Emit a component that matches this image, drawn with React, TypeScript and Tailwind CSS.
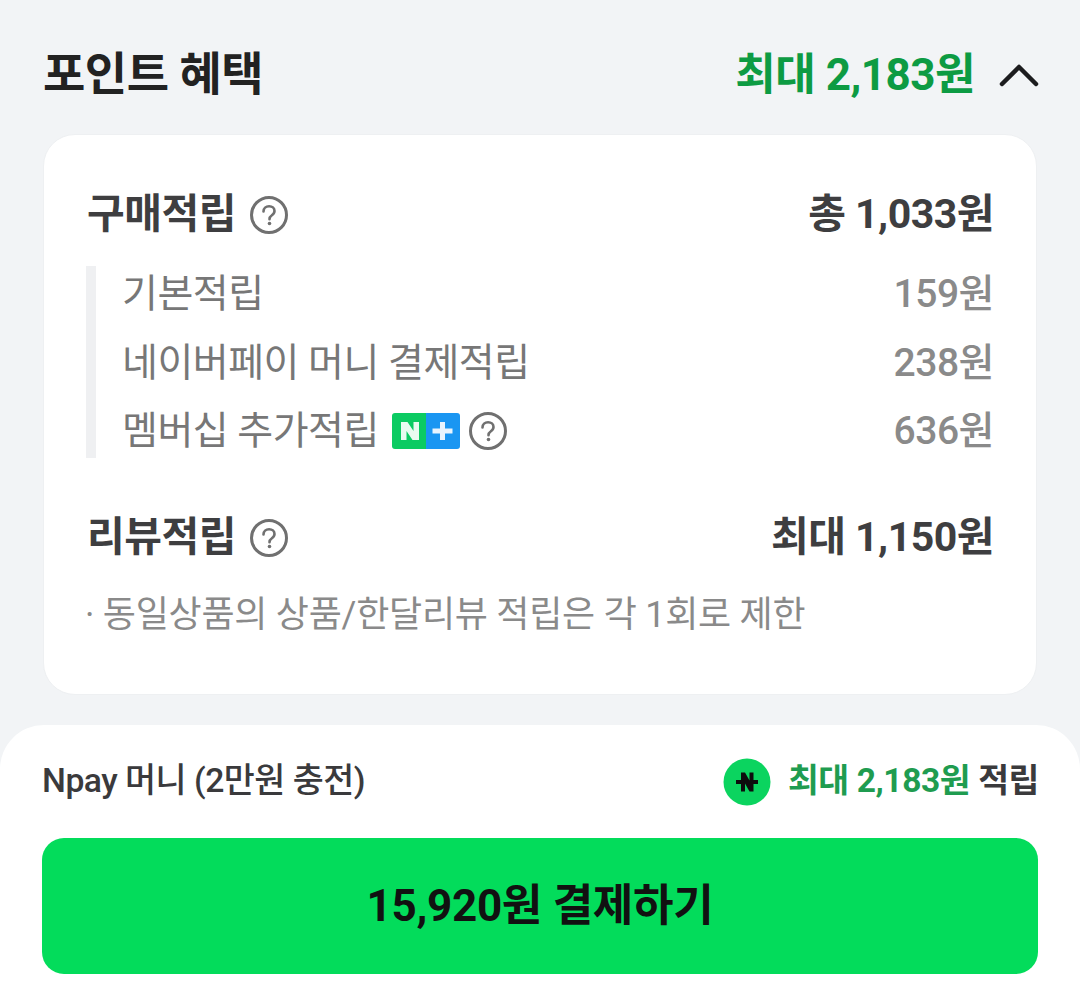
const FONT = "font-['Roboto','Noto_Sans_CJK_KR',sans-serif]";

function HelpIcon({ className }: { className?: string }) {
  return (
    <svg viewBox="0 0 38 38" className={className} fill="none">
      <circle cx="19" cy="19" r="17.5" stroke="#707070" strokeWidth="3" />
      <path
        d="M13.5 15.5c0-3.2 2.4-5.2 5.6-5.2 3.1 0 5.4 1.9 5.4 4.7 0 2.2-1.2 3.300-2.900 4.500-1.500 1-2.100 1.900-2.100 3.700"
        stroke="#707070"
        strokeWidth="2.600"
        strokeLinecap="round"
      />
      <circle cx="19.500" cy="27.500" r="1.800" fill="#707070" />
    </svg>
  );
}

function MembershipBadge() {
  return (
    <svg viewBox="0 0 68 36" className="h-9 w-[68px]">
      <path d="M3 0h31v36H3a3 3 0 0 1-3-3V3a3 3 0 0 1 3-3z" fill="#0bcb62" />
      <path d="M34 0h31a3 3 0 0 1 3 3v30a3 3 0 0 1-3 3H34z" fill="#1a96f2" />
      <path d="M9 9h6.500l6 9V9H27v18h-6.500l-6-9v9H9z" fill="#e8fbf0" />
      <path d="M48 9h5v6.500h7.500v5H53V27h-5v-6.500h-7.500v-5H48z" fill="#e8f4fe" />
    </svg>
  );
}

function NpayCoin() {
  return (
    <svg viewBox="0 0 48 48" className="size-12">
      <circle cx="24" cy="24" r="23.500" fill="#0bd45f" />
      <path
        d="M13 22h5v-7.500h4l4.500 8V14.500h4V22H35v4h-4.500v7.500h-4l-4.500-8v8h-4V26h-5z"
        fill="#0d0d0d"
      />
    </svg>
  );
}

function SubRow({ label, value, extra }: { label: string; value: string; extra?: React.ReactNode }) {
  return (
    <div className="flex h-[68.5px] items-center justify-between">
      <div className="flex items-center text-[39px] tracking-[-0.5px] text-[#777777]">
        <span>{label}</span>
        {extra}
      </div>
      <span className="text-[39px] font-medium tracking-[-0.5px] text-[#8a8a8a]">{value}</span>
    </div>
  );
}

export default function App() {
  return (
    <div className={`${FONT} flex h-[1001px] w-[1080px] flex-col overflow-hidden bg-[#f2f4f6]`}>
      <div className="flex-1 px-[43px]">
        <div className="flex h-[134px] items-center justify-between pt-[15px]">
          <h2 className="text-[46px] font-bold tracking-[-0.5px] text-[#222222]">포인트 혜택</h2>
          <div className="flex items-center gap-[24px]">
            <span className="text-[44px] font-bold tracking-[-0.5px] text-[#0d9b43]">최대 2,183원</span>
            <svg viewBox="0 0 40 24" className="mr-[-2px] h-6 w-10" fill="none">
              <path d="M3 21 20 4l17 17" stroke="#1c1c1e" strokeWidth="4.500" strokeLinecap="round" strokeLinejoin="round" />
            </svg>
          </div>
        </div>

        <div className="h-[561px] rounded-[32px] border border-[#eef0f2] bg-white pl-[43px] pr-[42px] pt-[45px]">
          <div className="flex h-[70px] items-center justify-between">
            <div className="flex items-center gap-[14px]">
              <span className="text-[41px] font-bold tracking-[-0.5px] text-[#3e3e40]">구매적립</span>
              <HelpIcon className="size-[38px]" />
            </div>
            <span className="text-[41px] font-bold tracking-[-0.5px] text-[#3e3e40]">총 1,033원</span>
          </div>

          <div className="-ml-[1px] mt-[16px] flow-root h-[192px] border-l-[10px] border-[#eff0f2] pl-[26px]">
            <div className="-mt-[6px]">
              <SubRow label="기본적립" value="159원" />
              <SubRow label="네이버페이 머니 결제적립" value="238원" />
              <SubRow
                label="멤버십 추가적립"
                value="636원"
                extra={
                  <span className="ml-[13px] flex items-center gap-[9px]">
                    <MembershipBadge />
                    <HelpIcon className="size-[38px]" />
                  </span>
                }
              />
            </div>
          </div>

          <div className="mt-[45px] flex h-[70px] items-center justify-between">
            <div className="flex items-center gap-[14px]">
              <span className="text-[41px] font-bold tracking-[-0.5px] text-[#3e3e40]">리뷰적립</span>
              <HelpIcon className="size-[38px]" />
            </div>
            <span className="text-[41px] font-bold tracking-[-0.5px] text-[#3e3e40]">최대 1,150원</span>
          </div>
          <p className="-ml-[2px] mt-[15px] text-[36px] tracking-[-0.25px] text-[#8a8a8a]">· 동일상품의 상품/한달리뷰 적립은 각 1회로 제한</p>
        </div>
      </div>

      <div className="h-[276px] rounded-t-[44px] bg-white px-[42px]">
        <div className="flex h-[113px] items-center justify-between">
          <span className="text-[33.7px] font-medium tracking-[-0.5px] text-[#3a3a3c]">Npay 머니 (2만원 충전)</span>
          <div className="mr-[-1px] flex items-center gap-[17px]">
            <NpayCoin />
            <span className="text-[33.5px] font-bold tracking-[-0.4px] text-[#3a3a3c]">
              <span className="text-[#1f9c50]">최대 2,183원</span> 적립
            </span>
          </div>
        </div>
        <button className="flex h-[136px] w-full items-center justify-center rounded-[22px] bg-[#03dc5b] text-[44px] font-bold tracking-[-0.3px] text-[#111111]">
          15,920원 결제하기
        </button>
      </div>
    </div>
  );
}
